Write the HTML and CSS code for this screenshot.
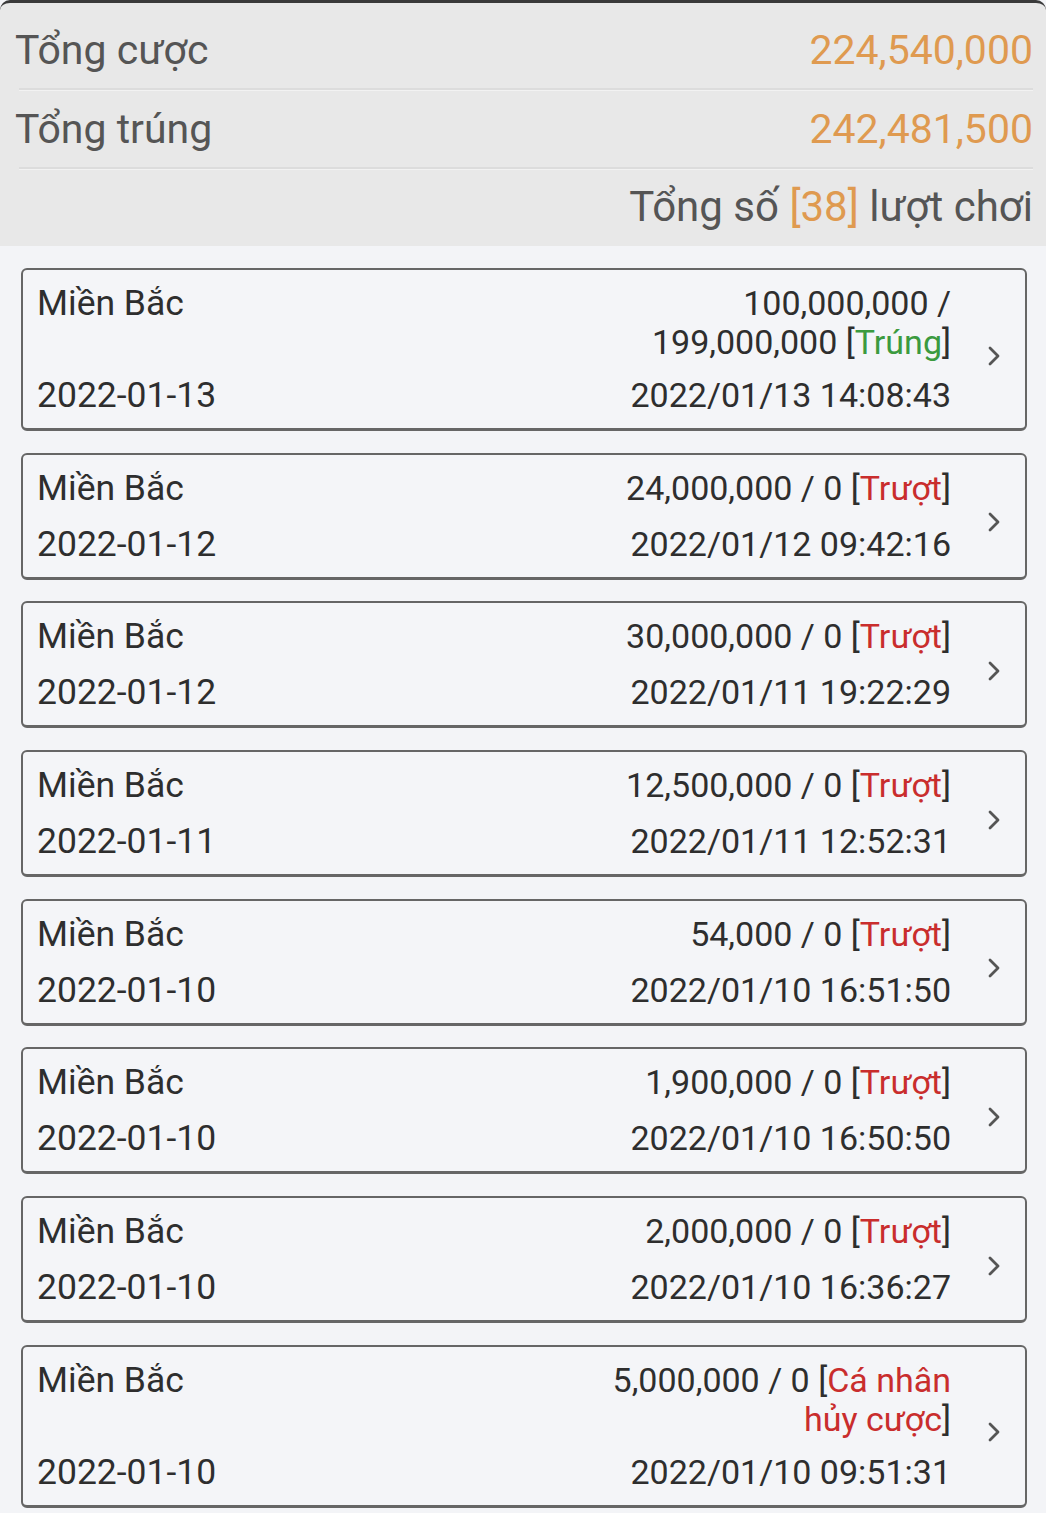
FILE: index.html
```html
<!DOCTYPE html>
<html lang="vi">
<head>
<meta charset="utf-8">
<link rel="stylesheet" href="styles.css">
</head>
<body>
<div class="page">
  <header class="summary">
    <div class="sum-row">
      <span class="sum-label">Tổng cược</span>
      <span class="sum-value">224,540,000</span>
    </div>
    <div class="sum-row">
      <span class="sum-label">Tổng trúng</span>
      <span class="sum-value">242,481,500</span>
    </div>
    <div class="sum-count">Tổng số <span class="orange">[38]</span> lượt chơi</div>
  </header>

  <main class="list">
    <div class="card">
      <div class="col-left">
        <div class="line">Miền Bắc</div>
        <div class="line">2022-01-13</div>
      </div>
      <div class="col-right">
        <div class="amount">100,000,000 /<br>199,000,000 [<span class="win">Trúng</span>]</div>
        <div class="line">2022/01/13 14:08:43</div>
      </div>
      <svg class="chev" viewBox="0 0 14 24" width="14" height="24"><path d="M3 4 L11 12 L3 20" fill="none" stroke="#555" stroke-width="2.8" stroke-linecap="round" stroke-linejoin="round"/></svg>
    </div>

    <div class="card">
      <div class="col-left">
        <div class="line">Miền Bắc</div>
        <div class="line">2022-01-12</div>
      </div>
      <div class="col-right">
        <div class="amount">24,000,000 / 0 [<span class="lose">Trượt</span>]</div>
        <div class="line">2022/01/12 09:42:16</div>
      </div>
      <svg class="chev" viewBox="0 0 14 24" width="14" height="24"><path d="M3 4 L11 12 L3 20" fill="none" stroke="#555" stroke-width="2.8" stroke-linecap="round" stroke-linejoin="round"/></svg>
    </div>

    <div class="card">
      <div class="col-left">
        <div class="line">Miền Bắc</div>
        <div class="line">2022-01-12</div>
      </div>
      <div class="col-right">
        <div class="amount">30,000,000 / 0 [<span class="lose">Trượt</span>]</div>
        <div class="line">2022/01/11 19:22:29</div>
      </div>
      <svg class="chev" viewBox="0 0 14 24" width="14" height="24"><path d="M3 4 L11 12 L3 20" fill="none" stroke="#555" stroke-width="2.8" stroke-linecap="round" stroke-linejoin="round"/></svg>
    </div>

    <div class="card">
      <div class="col-left">
        <div class="line">Miền Bắc</div>
        <div class="line">2022-01-11</div>
      </div>
      <div class="col-right">
        <div class="amount">12,500,000 / 0 [<span class="lose">Trượt</span>]</div>
        <div class="line">2022/01/11 12:52:31</div>
      </div>
      <svg class="chev" viewBox="0 0 14 24" width="14" height="24"><path d="M3 4 L11 12 L3 20" fill="none" stroke="#555" stroke-width="2.8" stroke-linecap="round" stroke-linejoin="round"/></svg>
    </div>

    <div class="card">
      <div class="col-left">
        <div class="line">Miền Bắc</div>
        <div class="line">2022-01-10</div>
      </div>
      <div class="col-right">
        <div class="amount">54,000 / 0 [<span class="lose">Trượt</span>]</div>
        <div class="line">2022/01/10 16:51:50</div>
      </div>
      <svg class="chev" viewBox="0 0 14 24" width="14" height="24"><path d="M3 4 L11 12 L3 20" fill="none" stroke="#555" stroke-width="2.8" stroke-linecap="round" stroke-linejoin="round"/></svg>
    </div>

    <div class="card">
      <div class="col-left">
        <div class="line">Miền Bắc</div>
        <div class="line">2022-01-10</div>
      </div>
      <div class="col-right">
        <div class="amount">1,900,000 / 0 [<span class="lose">Trượt</span>]</div>
        <div class="line">2022/01/10 16:50:50</div>
      </div>
      <svg class="chev" viewBox="0 0 14 24" width="14" height="24"><path d="M3 4 L11 12 L3 20" fill="none" stroke="#555" stroke-width="2.8" stroke-linecap="round" stroke-linejoin="round"/></svg>
    </div>

    <div class="card">
      <div class="col-left">
        <div class="line">Miền Bắc</div>
        <div class="line">2022-01-10</div>
      </div>
      <div class="col-right">
        <div class="amount">2,000,000 / 0 [<span class="lose">Trượt</span>]</div>
        <div class="line">2022/01/10 16:36:27</div>
      </div>
      <svg class="chev" viewBox="0 0 14 24" width="14" height="24"><path d="M3 4 L11 12 L3 20" fill="none" stroke="#555" stroke-width="2.8" stroke-linecap="round" stroke-linejoin="round"/></svg>
    </div>

    <div class="card">
      <div class="col-left">
        <div class="line">Miền Bắc</div>
        <div class="line">2022-01-10</div>
      </div>
      <div class="col-right">
        <div class="amount">5,000,000 / 0 [<span class="lose">Cá nhân<br>hủy cược</span>]</div>
        <div class="line">2022/01/10 09:51:31</div>
      </div>
      <svg class="chev" viewBox="0 0 14 24" width="14" height="24"><path d="M3 4 L11 12 L3 20" fill="none" stroke="#555" stroke-width="2.8" stroke-linecap="round" stroke-linejoin="round"/></svg>
    </div>
  </main>
</div>
</body>
</html>
```

FILE: styles.css
```css
* { box-sizing: border-box; }
html, body { margin: 0; padding: 0; }
body {
  background: #f3f4f7;
  font-family: Roboto, "Noto Sans", "Liberation Sans", sans-serif;
  color: #333;
  width: 1046px;
  overflow: hidden;
}
.page { width: 1046px; }

.summary {
  background: #e8e8e8;
  border-top: 3px solid #3a3a3a;
  border-top-left-radius: 10px;
  border-top-right-radius: 10px;
  padding: 8px 13px 0 15px;
  height: 246px;
  color: #555;
}
.sum-row {
  display: flex;
  justify-content: space-between;
  align-items: center;
  height: 79px;
  font-size: 41px;
  border-bottom: 2px solid #dcdcdc;
  box-shadow: 0 1px 0 #f2f2f2;
  margin-left: 4px;
}
.sum-row .sum-label { margin-left: -4px; }
.sum-value { color: #df9a50; }
.sum-count {
  text-align: right;
  font-size: 42px;
  height: 76px;
  line-height: 76px;
}
.orange { color: #df9a50; }

.list {
  display: flex;
  flex-direction: column;
  gap: 21.7px;
  padding: 22px 19px 20px 21px;
}
.card {
  display: flex;
  align-items: stretch;
  border: 2px solid #666;
  border-bottom-width: 3px;
  border-radius: 6px;
  background: #f4f5f8;
  padding: 14px 0 13px 14px;
  font-size: 34px;
  line-height: 39px;
  color: #2e2e2e;
}
.col-left {
  flex: 1;
  display: flex;
  flex-direction: column;
  justify-content: space-between;
  gap: 17px;
  font-size: 35.5px;
}
.col-right {
  display: flex;
  flex-direction: column;
  justify-content: space-between;
  align-items: flex-end;
  text-align: right;
  gap: 14px;
}
.line { white-space: nowrap; }
.win { color: #3b9a3f; }
.lose { color: #c92d2d; }
.chev {
  align-self: center;
  margin: 12px 24px 0 36px;
  flex: none;
}
```
